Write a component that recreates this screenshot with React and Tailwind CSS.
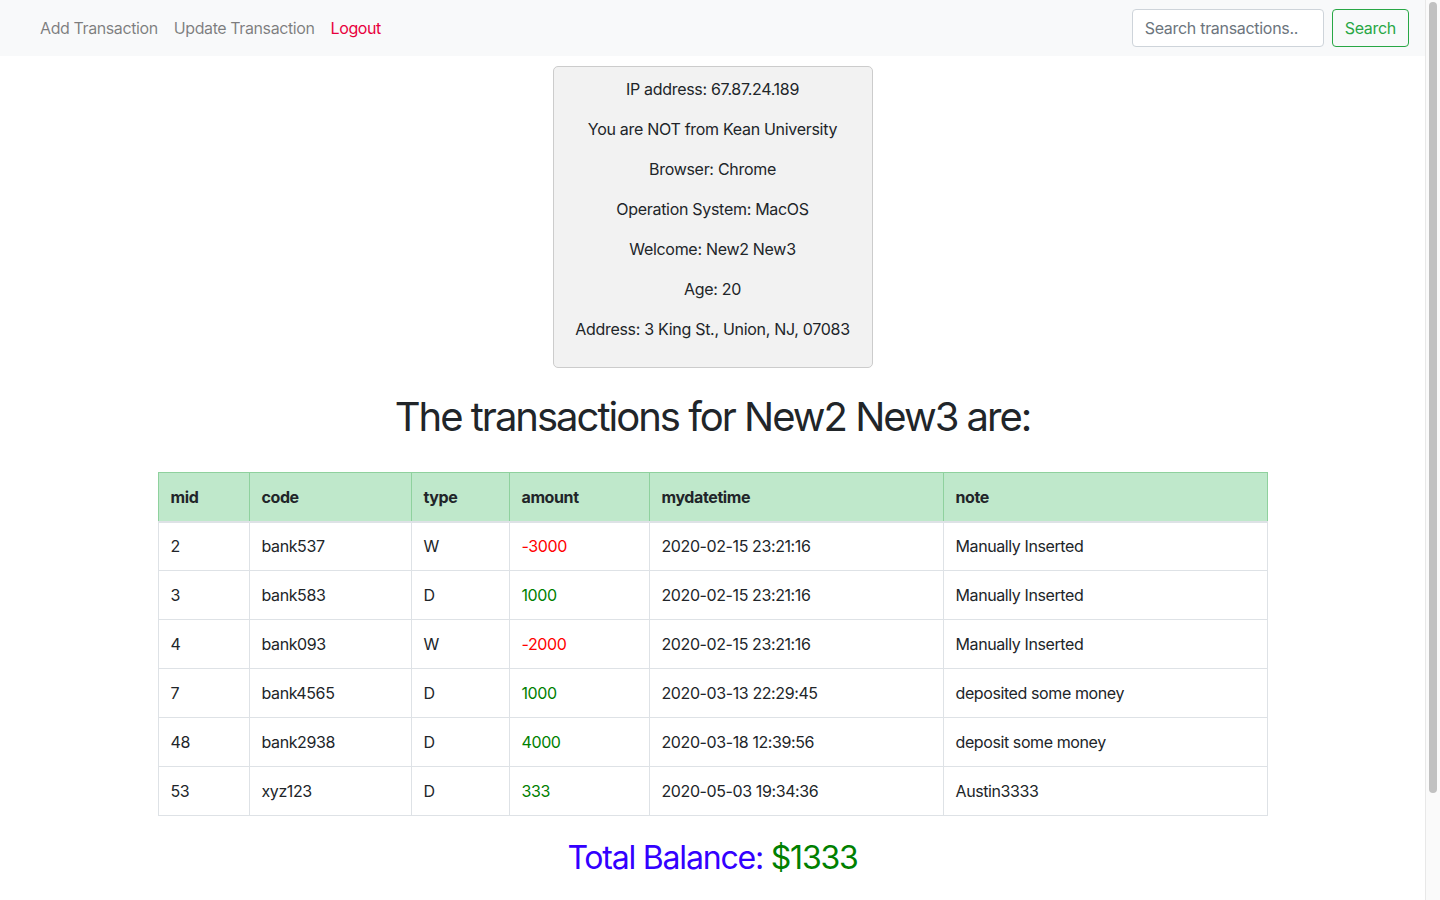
import React from "react";

const info = [
  "IP address: 67.87.24.189",
  "You are NOT from Kean University",
  "Browser: Chrome",
  "Operation System: MacOS",
  "Welcome: New2 New3",
  "Age: 20",
  "Address: 3 King St., Union, NJ, 07083",
];

const rows = [
  { mid: 2, code: "bank537", type: "W", amount: -3000, time: "2020-02-15 23:21:16", note: "Manually Inserted" },
  { mid: 3, code: "bank583", type: "D", amount: 1000, time: "2020-02-15 23:21:16", note: "Manually Inserted" },
  { mid: 4, code: "bank093", type: "W", amount: -2000, time: "2020-02-15 23:21:16", note: "Manually Inserted" },
  { mid: 7, code: "bank4565", type: "D", amount: 1000, time: "2020-03-13 22:29:45", note: "deposited some money" },
  { mid: 48, code: "bank2938", type: "D", amount: 4000, time: "2020-03-18 12:39:56", note: "deposit some money" },
  { mid: 53, code: "xyz123", type: "D", amount: 333, time: "2020-05-03 19:34:36", note: "Austin3333" },
];

const cols = [
  { key: "mid", w: "w-[91px]" },
  { key: "code", w: "w-[162px]" },
  { key: "type", w: "w-[98px]" },
  { key: "amount", w: "w-[140px]" },
  { key: "mydatetime", w: "w-[294px]" },
  { key: "note", w: "" },
];

function Navbar() {
  return (
    <nav className="h-[56px] bg-[#f8f9fa] flex items-center justify-between pl-[40px] pr-4">
      <div className="flex items-center gap-4 tracking-[-0.4px]">
        <a className="text-[rgba(0,0,0,0.5)]">Add Transaction</a>
        <a className="text-[rgba(0,0,0,0.5)]">Update Transaction</a>
        <a className="text-[#e8003d]">Logout</a>
      </div>
      <form className="flex items-center gap-2">
        <input
          type="text"
          placeholder="Search transactions.."
          className="w-[192px] h-[38px] px-3 rounded border border-[#ced4da] bg-white text-[#495057] placeholder:text-[#6c757d] outline-none tracking-[-0.3px]"
        />
        <button
          type="button"
          className="h-[38px] px-3 rounded border border-[#28a745] text-[#28a745] bg-transparent tracking-[-0.3px]"
        >
          Search
        </button>
      </form>
    </nav>
  );
}

// fake window scrollbar, as in the screenshot
function ScrollBar() {
  return (
    <div className="w-[15px] shrink-0 bg-[#fafafa] border-l border-[#e8e8e8] pt-[2px] px-[3px]">
      <div className="h-[791px] rounded-full bg-[#c1c1c1]" />
    </div>
  );
}

export default function App() {
  return (
    <div
      className="h-screen flex bg-white text-[#212529] text-base leading-6 overflow-hidden"
      style={{ fontFamily: "Inter, 'Noto Sans', sans-serif" }}
    >
      <main className="flex-1 min-w-0">
        <Navbar />

        <div className="flex justify-center mt-[10px]">
          <div className="w-[320px] bg-[#f2f2f2] border border-[#cccccc] rounded-[5px] p-[10px] text-center">
            {info.map((line) => (
              <p key={line} className="mb-4 tracking-[-0.3px]">
                {line}
              </p>
            ))}
          </div>
        </div>

        <h1 className="text-center text-[40px] leading-[48px] font-normal mt-[25px] mb-[31px] tracking-[-2px]">
          The transactions for New2 New3 are:
        </h1>

        <div className="w-[1110px] mx-auto">
          <table className="w-full border-collapse border border-[#dee2e6] text-left tracking-[-0.4px]">
            <thead>
              <tr className="bg-[#bfe8cb]">
                {cols.map((c) => (
                  <th
                    key={c.key}
                    className={`${c.w} h-[49px] px-3 font-bold border border-[#8fd19e] border-b-2 border-b-[#dee2e6]`}
                  >
                    {c.key}
                  </th>
                ))}
              </tr>
            </thead>
            <tbody>
              {rows.map((r) => (
                <tr key={r.mid}>
                  <td className="h-[49px] px-3 border border-[#dee2e6]">{r.mid}</td>
                  <td className="px-3 border border-[#dee2e6]">{r.code}</td>
                  <td className="px-3 border border-[#dee2e6]">{r.type}</td>
                  <td
                    className={`px-3 border border-[#dee2e6] ${
                      r.amount < 0 ? "text-[#ff0000]" : "text-[#008000]"
                    }`}
                  >
                    {r.amount}
                  </td>
                  <td className="px-3 border border-[#dee2e6]">{r.time}</td>
                  <td className="px-3 border border-[#dee2e6]">{r.note}</td>
                </tr>
              ))}
            </tbody>
          </table>
        </div>

        <h2 className="text-center text-[32px] leading-[38px] mt-[23px] tracking-[-1.2px]">
          <span className="text-[#3300ff]">Total Balance: </span>
          <span className="text-[#008000]">$1333</span>
        </h2>
      </main>
      <ScrollBar />
    </div>
  );
}
